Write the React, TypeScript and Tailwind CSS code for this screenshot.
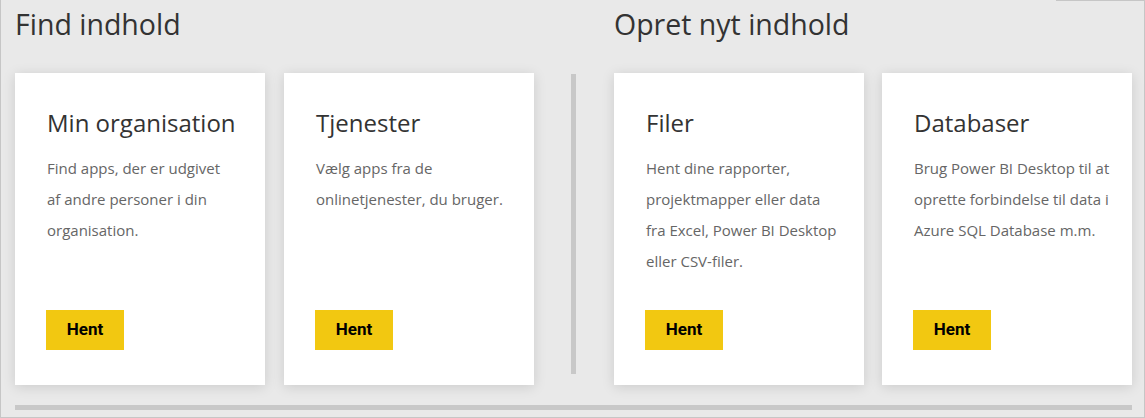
type CardData = { title: string; lines: string[] };

const cardsLeft: CardData[] = [
  {
    title: "Min organisation",
    lines: ["Find apps, der er udgivet", "af andre personer i din", "organisation."],
  },
  {
    title: "Tjenester",
    lines: ["Vælg apps fra de", "onlinetjenester, du bruger."],
  },
];

const cardsRight: CardData[] = [
  {
    title: "Filer",
    lines: [
      "Hent dine rapporter,",
      "projektmapper eller data",
      "fra Excel, Power BI Desktop",
      "eller CSV-filer.",
    ],
  },
  {
    title: "Databaser",
    lines: [
      "Brug Power BI Desktop til at",
      "oprette forbindelse til data i",
      "Azure SQL Database m.m.",
    ],
  },
];

function Card({ title, lines }: CardData) {
  return (
    <div className="flex h-[312px] w-[250px] shrink-0 flex-col bg-white pb-[35px] pl-[32px] pt-[34px] shadow-[0_2px_12px_rgba(0,0,0,0.13)]">
      <h3 className="text-[24px] leading-[32px] text-[#333333]">{title}</h3>
      <p className="mt-[14px] whitespace-nowrap text-[15px] leading-[31px] text-[#666666]">
        {lines.map((line) => (
          <span key={line} className="block">
            {line}
          </span>
        ))}
      </p>
      <button
        type="button"
        className="mt-auto -ml-px h-[40px] w-[78px] bg-[#f2c811] font-['Roboto',sans-serif] text-[17px] font-bold text-black"
      >
        Hent
      </button>
    </div>
  );
}

function Section({ heading, cards, gap }: { heading: string; cards: CardData[]; gap: string }) {
  return (
    <div className="flex flex-col">
      <h2 className="pt-[5px] text-[28.5px] font-normal leading-[38px] text-[#333333]">{heading}</h2>
      <div className={`mt-[30px] flex ${gap}`}>
        {cards.map((card) => (
          <Card key={card.title} {...card} />
        ))}
      </div>
    </div>
  );
}

export default function App() {
  return (
    <div className="flex h-[418px] w-[1145px] flex-col border-b border-l border-r border-[#c6c6c6] bg-[#e9e9e9] font-['Open_Sans',sans-serif]">
      <div className="flex h-0 justify-end">
        <div className="h-px w-[88px] bg-[#c6c6c6]" />
      </div>
      <div className="flex pl-[14px]">
        <Section heading="Find indhold" cards={cardsLeft} gap="gap-[19px]" />
        <div className="ml-[37px] mr-[38px] mt-[74px] h-[300px] w-[5px] bg-[#c8c8c8]" />
        <Section heading="Opret nyt indhold" cards={cardsRight} gap="gap-[18px]" />
      </div>
      <div className="ml-[14px] mt-[20px] h-[5px] w-[1117px] bg-[#c8c8c8]" />
    </div>
  );
}
